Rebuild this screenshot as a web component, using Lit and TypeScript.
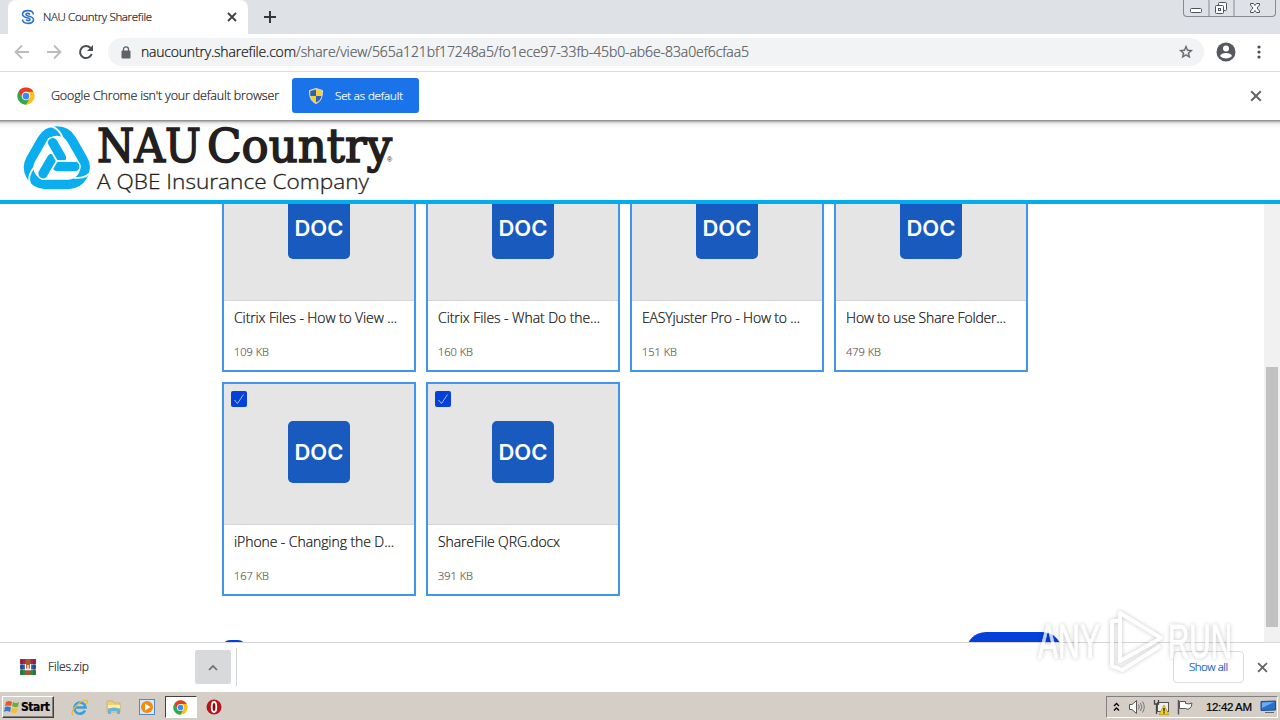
import { LitElement, html, css, svg } from 'lit';
import { customElement, property } from 'lit/decorators.js';

const FILES = [
  { name: 'Citrix Files - How to View ...', size: '109 KB', width: 163 },
  { name: 'Citrix Files - What Do the...', size: '160 KB', width: 162 },
  { name: 'EASYjuster Pro - How to ...', size: '151 KB', width: 158 },
  { name: 'How to use Share Folder...', size: '479 KB', width: 160 },
  { name: 'iPhone - Changing the D...', size: '167 KB', width: 160 },
  { name: 'ShareFile QRG.docx', size: '391 KB', width: 122 },
];

const chromeBall = (size: number) => html`
  <svg width=${size} height=${size} viewBox="0 0 48 48">
    <circle cx="24" cy="24" r="23" fill="#fbc116" />
    <path d="M4.1 12.5A23 23 0 0 1 43.9 12.5L24 13 14 29.8Z" fill="#e33b2e" />
    <path d="M4.1 12.5A23 23 0 0 0 24 47L34 29.8 14.5 29.5Z" fill="#2da94f" />
    <circle cx="24" cy="24" r="11.5" fill="#fff" />
    <circle cx="24" cy="24" r="9" fill="#4285f4" />
  </svg>`;

const cross = (size: number, color: string, stroke = 1.8) => html`
  <svg width=${size} height=${size} viewBox="0 0 10 10">
    <path d="M1 1L9 9M9 1L1 9" stroke=${color} stroke-width=${stroke} fill="none" />
  </svg>`;

// Text drawn to an exact advance width
@customElement('fit-label')
class FitLabel extends LitElement {
  @property() text = '';
  @property({ type: Number }) width = 100;
  @property({ type: Number }) size = 13;

  static styles = css`
    :host {
      display: block;
      flex: none;
    }
    svg {
      display: block;
      overflow: visible;
    }
    text {
      fill: currentColor;
      stroke: currentColor;
      stroke-width: 0.22px;
      font-family: inherit;
    }
  `;

  render() {
    return html`
      <svg width=${this.width} height="18">
        <text x="0" y="13" font-size=${this.size} textLength=${this.width}>${this.text}</text>
      </svg>
    `;
  }
}

@customElement('file-card')
class FileCard extends LitElement {
  @property({ type: Object }) file: any = {};

  static styles = css`
    :host {
      display: block;
      box-sizing: border-box;
      height: 214px;
      border: 2px solid #4095ec;
      background: #fff;
      font-family: 'Open Sans', 'Noto Sans', sans-serif;
      font-weight: 350;
    }
    .preview {
      position: relative;
      box-sizing: border-box;
      height: 141px;
      padding-top: 37px;
      background: #e5e5e5;
      border-bottom: 1px solid #d4d4d4;
    }
    .check {
      position: absolute;
      left: 7px;
      top: 7px;
      width: 16px;
      height: 16px;
      border-radius: 2px;
      background: #0540d8;
    }
    .check svg {
      display: block;
    }
    .doc {
      width: 62px;
      height: 62px;
      margin: 0 auto;
      border-radius: 5px;
      background: #185abd;
      color: #fff;
      font: 600 22px/63px Inter, sans-serif;
      text-align: center;
    }
    .name {
      padding: 9px 10px 0;
      color: #111;
    }
    .size {
      padding: 15px 10px 0;
      color: #666;
    }
  `;

  render() {
    return html`
      <div class="preview">
        <div class="check">
          <svg width="16" height="16"><path d="M3.5 9L6.5 12.5 12.5 3.5" stroke="#9dbcf5" fill="none" /></svg>
        </div>
        <div class="doc">DOC</div>
      </div>
      <div class="name"><fit-label .text=${this.file.name} .width=${this.file.width} .size=${14}></fit-label></div>
      <div class="size"><fit-label .text=${this.file.size} .width=${35} .size=${11}></fit-label></div>
    `;
  }
}

@customElement('browser-chrome')
class BrowserChrome extends LitElement {
  static styles = css`
    :host {
      display: block;
      flex: none;
      font-family: 'Open Sans', 'Noto Sans', sans-serif;
      font-weight: 350;
    }
    svg {
      display: block;
      flex: none;
    }
    .tabs {
      display: flex;
      height: 34px;
      background: #dee1e6;
    }
    .tab {
      display: flex;
      align-items: center;
      box-sizing: border-box;
      width: 240px;
      margin-left: 8px;
      padding: 0 11px 0 13px;
      border-radius: 8px 8px 0 0;
      background: #fff;
      color: #202327;
    }
    .tab fit-label {
      margin: 0 auto 0 8px;
    }
    .plus {
      margin: 11px 0 0 16px;
    }
    .win {
      display: flex;
      height: 16px;
      margin: 0 4px 0 auto;
      border: 1px solid #858a93;
      border-top: 0;
      border-radius: 0 0 4px 4px;
    }
    .toolbar {
      display: flex;
      align-items: center;
      box-sizing: border-box;
      height: 38px;
      padding: 0 14px 1px;
      border-bottom: 1px solid #dadce0;
      background: #fff;
    }
    .nav {
      margin-right: 16px;
    }
    .omnibox {
      display: flex;
      flex: 1;
      align-items: center;
      height: 28px;
      margin: 0 12px 0 -2px;
      padding: 0 10px 0 13px;
      border-radius: 14px;
      background: #f1f3f4;
    }
    .host {
      margin-left: 10px;
      padding-top: 2px;
      color: #111214;
    }
    .path {
      margin-right: auto;
      padding-top: 2px;
      color: #55585d;
    }
    .menu {
      margin: 0 5px 0 21px;
    }
    .infobar {
      display: flex;
      align-items: center;
      box-sizing: border-box;
      height: 48px;
      padding: 0 18px 1px 17px;
      background: #fff;
      color: #202327;
    }
    .infobar > fit-label {
      margin: 0 13px 0 16px;
      padding-top: 1px;
    }
    .button {
      display: flex;
      align-items: center;
      box-sizing: border-box;
      width: 127px;
      height: 35px;
      margin-right: auto;
      padding-left: 17px;
      gap: 12px;
      border-radius: 3px;
      background: #1a73e8;
      color: #fff;
    }
  `;

  render() {
    return html`
      <div class="tabs">
        <div class="tab">
          <svg width="14" height="16" viewBox="0 0 14 16" fill="none" stroke="#2f74c8">
            <path d="M12.500 5.500C12 .5 2 .2 1.500 5.300 1.500 9.500 9 8 9 10.500 9 12 6 12 5 10.500" stroke-width="1.600" />
            <path d="M1.500 10.500C2 15.500 12 15.800 12.500 10.700 12.500 6.500 5 8 5 5.500 5 4 8 4 9 5.500" stroke-width="1.600" />
          </svg>
          <fit-label text="NAU Country Sharefile" width="109" size="11.5"></fit-label>
          ${cross(10, '#3c4043')}
        </div>
        <svg class="plus" width="12" height="12"><path d="M6 0V12M0 6H12" stroke="#33363a" stroke-width="2" /></svg>
        <svg class="win" width="91" height="16" fill="#fff" stroke="#4e535b">
          <path d="M25 0V16M50 0V16" stroke="#858a93" />
          <rect x="6.500" y="8.500" width="11" height="4" rx="1" />
          <rect x="34.500" y="2.500" width="8" height="8" rx="1" />
          <rect x="31.500" y="5.500" width="8" height="8" rx="1" />
          <rect x="34.500" y="8.500" width="2" height="2" />
          <path d="M66.500 3.500h3l1.500 2 1.500-2h3v1.500l-2.500 3 2.500 3v1.500h-3l-1.500-2-1.500 2h-3v-1.500l2.500-3-2.500-3z" />
        </svg>
      </div>
      <div class="toolbar">
        <svg class="nav" width="16" height="16" fill="none" stroke="#babcbe" stroke-width="1.8"><path d="M15 8H2M8 1.500L1.500 8 8 14.500" /></svg>
        <svg class="nav" width="16" height="16" fill="none" stroke="#babcbe" stroke-width="1.8"><path d="M1 8H14M8 1.500L14.500 8 8 14.500" /></svg>
        <svg class="nav" width="16" height="16" fill="none" stroke="#4a4d51" stroke-width="2">
          <path d="M13.700 10A6 6 0 1 1 12.500 4" />
          <path d="M15 1V7H9Z" fill="#4a4d51" stroke="none" />
        </svg>
        <div class="omnibox">
          <svg width="10" height="13" viewBox="0 0 10 13">
            <rect x="0.500" y="4.500" width="9" height="8" rx="1" fill="#5f6368" />
            <path d="M2.500 5V3.300a2.500 2.500 0 0 1 5 0V5" fill="none" stroke="#5f6368" stroke-width="1.300" />
          </svg>
          <fit-label class="host" text="naucountry.sharefile.com" width="155" size="14"></fit-label>
          <fit-label class="path" text="/share/view/565a121bf17248a5/fo1ece97-33fb-45b0-ab6e-83a0ef6cfaa5" width="453" size="14"></fit-label>
          <svg width="16" height="16" viewBox="0 0 24 24" fill="#5f6368" stroke="#5f6368" stroke-width=".5">
            <path d="M22 9.240l-7.190-.62L12 2 9.190 8.630 2 9.240l5.460 4.730L5.820 21 12 17.270 18.180 21l-1.630-7.030L22 9.240zM12 15.400l-3.760 2.270 1-4.280-3.320-2.880 4.380-.38L12 6.100l1.710 4.040 4.380.38-3.320 2.880 1 4.280L12 15.400z" />
          </svg>
        </div>
        <svg width="20" height="20" viewBox="0 0 20 20">
          <circle cx="10" cy="10" r="9.500" fill="#55585d" />
          <circle cx="10" cy="6.500" r="3" fill="#fff" />
          <path d="M4 14C5 10 15 10 16 14 13.500 17.300 6.500 17.300 4 14Z" fill="#fff" />
        </svg>
        <svg class="menu" width="4" height="14" fill="#4a4d51"><circle cx="2" cy="2" r="1.600" /><circle cx="2" cy="7" r="1.600" /><circle cx="2" cy="12" r="1.600" /></svg>
      </div>
      <div class="infobar">
        ${chromeBall(18)}
        <fit-label text="Google Chrome isn't your default browser" width="228" size="12.5"></fit-label>
        <div class="button">
          <svg width="14" height="16" viewBox="0 0 14 16">
            <path d="M7 .5L13.500 2.500C13.500 10 11.500 13.500 7 15.500 2.500 13.500.5 10 .5 2.500Z" fill="#f7d038" stroke="#d7dee8" />
            <path d="M7 1.500V8H1.500Q1 6 1.300 3ZM7 8H12.500Q11.500 12.500 7 14.500Z" fill="#2c62b8" />
          </svg>
          <fit-label text="Set as default" width="68" size="11.5"></fit-label>
        </div>
        ${cross(12, '#5f6368', 1.6)}
      </div>
    `;
  }
}

@customElement('nau-logo')
class NauLogo extends LitElement {
  static styles = css`
    :host,
    svg {
      display: block;
    }
    .slab {
      font-family: 'DejaVu Serif', serif;
      font-size: 46px;
    }
    .sub {
      font-family: 'Open Sans', sans-serif;
      font-size: 21px;
      font-weight: 350;
      stroke-width: 0.3px;
    }
  `;

  render() {
    // The mark has threefold symmetry around (126, 122)
    const turns = [0, 120, 240];
    return html`
      <svg width="375" height="76" viewBox="20 122 375 76">
        <g transform="translate(14 119.500) scale(0.3400)" fill="none">
          <path
            d="M93.500 191H158.500A50 50 0 0 0 202 115.700L169.500 59.300A50 50 0 0 0 82.500 59.300L50 115.700A50 50 0 0 0 93.500 191Z"
            stroke="#0aaeef"
            stroke-width="28"
          />
          ${turns.map((a) => svg`
            <path d="M228 150Q212 178 172 170L158 160" transform="rotate(${a} 126 122)" stroke="#fff" stroke-width="5" />`)}
          ${turns.map((a) => svg`
            <path d="M178 138H128" transform="rotate(${a} 126 122)" stroke="#fff" stroke-width="37" stroke-linecap="round" />`)}
          ${turns.map((a) => svg`
            <path d="M178 138H128" transform="rotate(${a} 126 122)" stroke="#0aaeef" stroke-width="29" stroke-linecap="round" />`)}
          ${turns.map((a) => svg`
            <path d="M126 122H182" transform="rotate(${a} 126 122)" stroke="#fff" stroke-width="5" />`)}
        </g>
        <g fill="#231f20" stroke="#231f20">
          <text class="slab" x="97" y="161.500" textLength="104" lengthAdjust="spacingAndGlyphs" stroke-width="1.600">NAU</text>
          <text class="slab" x="207" y="161.500" textLength="185" lengthAdjust="spacingAndGlyphs" stroke-width="1.600">Country</text>
        </g>
        <text x="387" y="162" font-size="7" font-family="Liberation Sans" fill="#231f20">®</text>
        <text class="sub" x="97" y="189" textLength="272" lengthAdjust="spacingAndGlyphs" fill="#231f20" stroke="#231f20">A QBE Insurance Company</text>
      </svg>
    `;
  }
}

@customElement('task-bar')
class TaskBar extends LitElement {
  static styles = css`
    :host {
      display: flex;
      flex: none;
      align-items: center;
      box-sizing: border-box;
      height: 28px;
      padding: 1px 0 0 2px;
      border-top: 1px solid #d4d0c8;
      background: #d4cec6;
      font-family: 'DejaVu Sans', sans-serif;
      color: #000;
    }
    svg {
      display: block;
      flex: none;
    }
    .start {
      display: flex;
      align-items: center;
      box-sizing: border-box;
      width: 52px;
      height: 22px;
      margin-right: 17px;
      padding-left: 1px;
      gap: 1px;
      border: 1px solid;
      border-color: #fff #404040 #404040 #fff;
      box-shadow: inset -1px -1px #808080;
      font-family: 'DejaVu Sans Condensed', 'DejaVu Sans', sans-serif;
      font-weight: bold;
    }
    .apps {
      display: flex;
      align-items: center;
      gap: 17.5px;
    }
    .active {
      display: flex;
      align-items: center;
      justify-content: center;
      box-sizing: border-box;
      width: 32px;
      height: 22px;
      margin: 0 -8px;
      border: 1px solid;
      border-color: #404040 #fff #fff #404040;
      background: #fff;
    }
    .tray {
      display: flex;
      align-items: center;
      box-sizing: border-box;
      width: 172px;
      height: 22px;
      margin: 0 2px 0 auto;
      padding: 0 1px 0 6px;
      gap: 8px;
      border: 1px solid;
      border-color: #808080 #fff #fff #808080;
    }
    .clock {
      margin: 0 0 0 5px;
      font-family: 'Liberation Sans', sans-serif;
    }
  `;

  render() {
    return html`
      <div class="start">
        <svg width="16" height="16" viewBox="0 0 16 16">
          <path d="M2 3Q5 1 8 3L7 7Q4 6 1 7Z" fill="#e8572a" />
          <path d="M9 3Q12 5 15 3L14 7.500Q11 9 8 7Z" fill="#69ad3b" />
          <path d="M1 8Q4 7 7 8.500L6 13Q3 11 0 13Z" fill="#3a78cf" />
          <path d="M8 9Q11 10 14 9L13 13Q10 15 7 13Z" fill="#f6bd2c" />
        </svg>
        <fit-label text="Start" width="29" size="12"></fit-label>
      </div>
      <div class="apps">
        <svg width="17" height="17" viewBox="0 0 17 17" fill="none">
          <path d="M14 11.500A5.600 5.600 0 1 1 14.500 8.500H4.500" stroke="#39a0dc" stroke-width="2.600" />
          <path d="M2 16Q-1 14 5 7 12 0 16 1.500 17 3 15 5" stroke="#e6b73a" stroke-width="1.200" />
        </svg>
        <svg width="16" height="16" viewBox="0 0 16 16">
          <path d="M1 2h6l1 2h6v9H1Z" fill="#f1d06c" stroke="#c9a240" stroke-width=".6" />
          <path d="M2 6h12v3H2Z" fill="#fbeeb2" />
          <path d="M2 15V10Q8 7 14 10V15H11V12H5V15Z" fill="#62b4dc" />
        </svg>
        <svg width="16" height="16" viewBox="0 0 16 16">
          <rect x=".5" y=".5" width="15" height="15" fill="#d7e8f7" stroke="#508ac6" />
          <circle cx="8" cy="8" r="6" fill="#f18b13" />
          <path d="M6 4.500L11.500 8 6 11.500Z" fill="#fff" />
        </svg>
        <div class="active">${chromeBall(15)}</div>
        <svg width="16" height="16" viewBox="0 0 16 16">
          <circle cx="8" cy="8" r="7.500" fill="#b91319" />
          <ellipse cx="8" cy="8" rx="2.300" ry="5" fill="#8c0a0e" stroke="#fff" stroke-width="1.800" />
        </svg>
      </div>
      <div class="tray">
        <svg width="7" height="10" fill="none" stroke="#000" stroke-width="1.300"><path d="M1 4L3.500 1.500 6 4M1 8.500L3.500 6 6 8.500" /></svg>
        <svg width="17" height="16" viewBox="0 0 17 16" fill="none" stroke="#777">
          <path d="M1.500 5.500H4L8.500 1.500V14.500L4 10.500H1.500Z" fill="#fff" stroke="#555" />
          <path d="M10.500 5.500Q12 8 10.500 10.500M12.500 4Q15 8 12.500 12M14.500 2.500Q18 8 14.500 13.500" />
        </svg>
        <svg width="16" height="16" viewBox="0 0 16 16">
          <rect x="4.500" y="3.500" width="11" height="9" fill="#eee" stroke="#555" />
          <path d="M1.500 1V5H5.500V1M3.500 5V15" fill="none" stroke="#444" stroke-width="1.300" />
          <path d="M11 6L15.800 15.500H6.200Z" fill="#f8d21c" stroke="#a58609" stroke-width=".6" />
          <path d="M11 9V12.500M11 13.300V14.500" stroke="#000" stroke-width="1.200" />
        </svg>
        <svg width="16" height="16" viewBox="0 0 16 16" fill="#fff" stroke="#555">
          <path d="M1.500 1V15.500" stroke-width="1.500" />
          <path d="M2.500 2.500H8.500V4.500Q12 5.500 15 4 15 8 12 10 10 10.500 8.500 9.500H2.500Z" />
        </svg>
        <fit-label class="clock" text="12:42 AM" width="46" size="11.5"></fit-label>
        <svg width="16" height="14" viewBox="0 0 16 14">
          <path d="M1 1.500L15.500 1V10L1 10.500Z" fill="#2b6fc8" stroke="#1d4c8f" />
          <path d="M2 2.500L14 2 2 8Z" fill="#6cacf0" />
          <path d="M5 12.500H14" stroke="#666" />
        </svg>
      </div>
    `;
  }
}

@customElement('app-root')
class AppRoot extends LitElement {
  static styles = css`
    :host {
      position: relative;
      display: flex;
      flex-direction: column;
      width: 1280px;
      height: 720px;
      overflow: hidden;
      background: #fff;
      font-family: 'Open Sans', 'Noto Sans', sans-serif;
      font-weight: 350;
    }
    header {
      flex: none;
      box-sizing: border-box;
      height: 84px;
      padding: 2px 0 0 20px;
      border-bottom: 4px solid #00adee;
      background: linear-gradient(#8f8f8f 0, #999 1px, #d0d0d0 2px, #f1f1f1 4px, #fff 8px);
    }
    .body {
      display: flex;
      flex: 1;
      min-height: 0;
      overflow: hidden;
    }
    .content {
      flex: 1;
      padding-left: 222px;
    }
    .grid {
      display: grid;
      grid-template-columns: repeat(4, 194px);
      gap: 10px;
      margin-top: -46px;
    }
    .actions {
      display: flex;
      align-items: flex-start;
      justify-content: space-between;
      width: 840px;
      margin-top: 36px;
    }
    .all {
      width: 24px;
      height: 24px;
      margin-top: 8px;
      border-radius: 8px;
      background: #0540d8;
    }
    .download {
      width: 96px;
      height: 40px;
      border-radius: 20px;
      background: #0540d8;
    }
    .scroll {
      box-sizing: border-box;
      width: 16px;
      padding: 163px 2px 0;
      background: #f1f1f1;
    }
    .thumb {
      height: 260px;
      background: #c1c1c1;
    }
    .shelf {
      display: flex;
      flex: none;
      align-items: center;
      box-sizing: border-box;
      height: 50px;
      padding: 0 12px 1px 20px;
      border-top: 1px solid #d5d7da;
      color: #202327;
    }
    .shelf svg {
      display: block;
    }
    .zip {
      margin-left: 12px;
    }
    .caret {
      display: flex;
      align-items: center;
      justify-content: center;
      width: 36px;
      height: 34px;
      margin-left: 106px;
      border-radius: 2px;
      background: #d8d9da;
    }
    .rule {
      width: 1px;
      height: 38px;
      margin: 0 auto 0 5px;
      background: #d0d2d4;
    }
    .all-downloads {
      display: flex;
      align-items: center;
      justify-content: center;
      box-sizing: border-box;
      width: 71px;
      height: 32px;
      margin-right: 13px;
      border: 1px solid #dadce0;
      border-radius: 4px;
      color: #0b57c4;
    }
    .item {
      display: flex;
      align-items: center;
    }
    .mark {
      position: absolute;
      left: 1034px;
      top: 602px;
      filter: drop-shadow(0 0 2px rgba(0, 0, 0, 0.3));
      opacity: 0.75;
    }
    .mark text {
      font: 400 48px 'Liberation Sans', sans-serif;
    }
  `;

  render() {
    return html`
      <browser-chrome></browser-chrome>
      <header><nau-logo></nau-logo></header>
      <div class="body">
        <div class="content">
          <div class="grid">${FILES.map((f) => html`<file-card .file=${f}></file-card>`)}</div>
          <div class="actions">
            <div class="all"></div>
            <div class="download"></div>
          </div>
        </div>
        <div class="scroll"><div class="thumb"></div></div>
      </div>
      <div class="shelf">
        <div class="item">
          <svg width="16" height="16" viewBox="0 0 16 16">
            <rect width="16" height="5" y="0" fill="#a92546" />
            <rect width="16" height="5" y="5.500" fill="#3456a8" />
            <rect width="16" height="5" y="11" fill="#2d8b45" />
            <rect x="5.500" width="5" height="16" fill="#a9562a" />
            <path d="M2 0V16M14 0V16" stroke="#32204a" stroke-opacity=".5" />
            <path d="M5.500 5V10.500H10.500V5M8 6V10" fill="none" stroke="#fff" stroke-width="1.300" />
          </svg>
          <fit-label class="zip" text="Files.zip" width="41" size="12"></fit-label>
        </div>
        <div class="caret">
          <svg width="10" height="7"><path d="M1 6L5 2 9 6" fill="none" stroke="#6a6d70" stroke-width="1.700" /></svg>
        </div>
        <div class="rule"></div>
        <div class="all-downloads"><fit-label text="Show all" width="39" size="11.5"></fit-label></div>
        ${cross(11, '#5f6368', 1.6)}
      </div>
      <task-bar></task-bar>
      <svg class="mark" width="204" height="76" viewBox="0 0 204 76" fill="#fff">
        <text x="4" y="56" textLength="62" lengthAdjust="spacingAndGlyphs" stroke="#fff">ANY</text>
        <g fill="none" stroke="#fff" stroke-width="4" stroke-linejoin="round">
          <path d="M86 59V11L127 36Z" />
          <path d="M86 19H78V64L88 68 126 44" />
        </g>
        <text x="134" y="56" textLength="64" lengthAdjust="spacingAndGlyphs" stroke="#fff">RUN</text>
      </svg>
    `;
  }
}
